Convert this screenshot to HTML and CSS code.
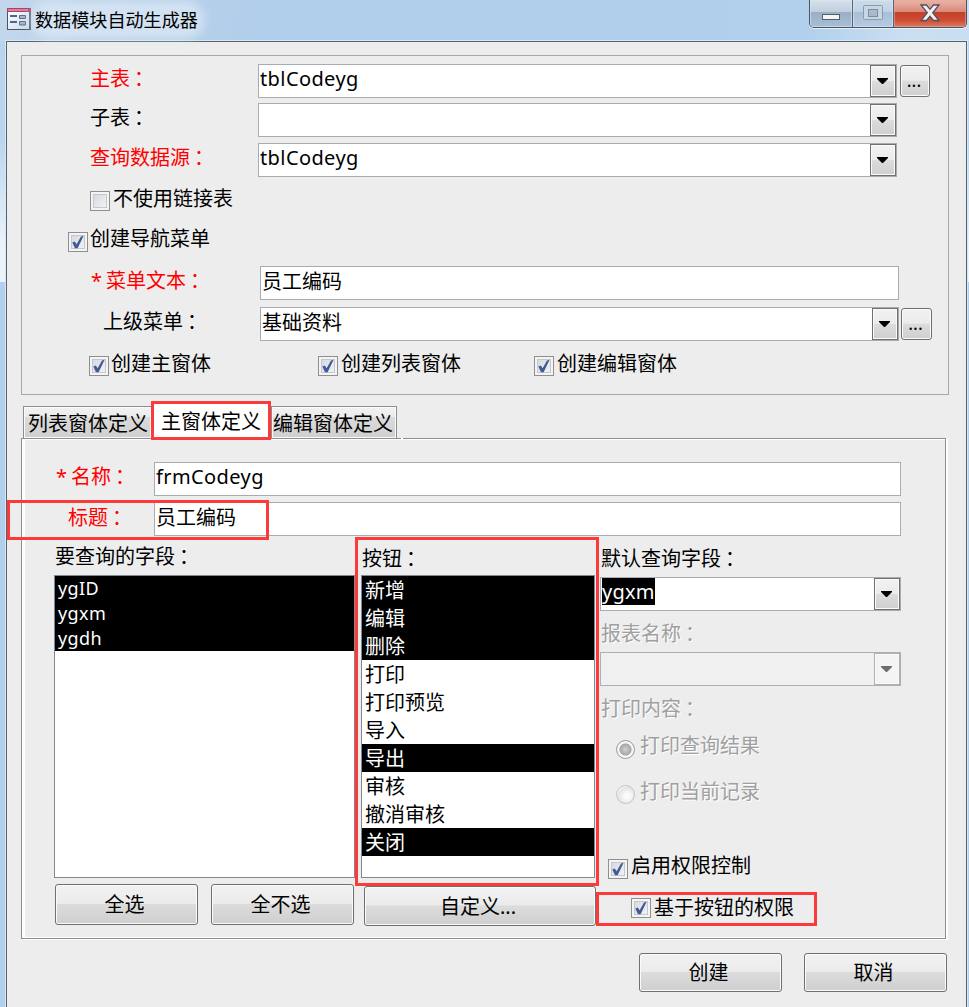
FILE: index.html
```html
<!DOCTYPE html>
<html lang="zh-CN">
<head>
<meta charset="utf-8">
<title>数据模块自动生成器</title>
<link rel="stylesheet" href="styles.css">
</head>
<body>
<svg width="0" height="0" class="defs">
  <symbol id="tick" viewBox="0 0 20 20"><path d="M4.300 10.600 L6.800 9.600 L8.600 12.200 L13 4.400 L15.600 3.800 L9.600 16.200 L7 16.200 Z" fill="#435a96"/></symbol>
  <symbol id="arrow" viewBox="0 0 12 6"><path d="M0 0H11V1L6 6H5L0 1Z" fill="currentColor"/></symbol>
</svg>
<div class="window">
  <header class="titlebar">
    <svg class="app-icon" width="24" height="22" viewBox="0 0 24 22">
      <defs><linearGradient id="ig" x2="1" y2="1"><stop offset="0" stop-color="#fff"/><stop offset="1" stop-color="#cbd7ea"/></linearGradient></defs>
      <rect width="24" height="22" fill="#47566f"/><rect x="1" y="1" width="21" height="20" fill="#8492aa"/>
      <rect x="1" y="4" width="21" height="17" fill="url(#ig)"/><rect width="24" height="4" fill="#a94368"/><rect x="1" y="1" width="20" height="2" fill="#d6829e"/>
      <path d="M3 8H10M3 14H10" stroke="#4d668c" stroke-width="2"/>
      <path d="M12.5 7.5H18.5V10.5H12.5ZM12.5 13.5H18.5V17H12.5Z" fill="#a8b4c8" stroke="#596f91"/>
    </svg>
    <h1 class="title">数据模块自动生成器</h1>
    <div class="controls">
      <div class="ctl min"><svg width="20" height="8"><rect x="1.500" y="1.500" width="17" height="5" fill="#f5f6f2" stroke="#535d6b"/></svg></div>
      <div class="ctl max"><svg width="20" height="17"><rect x=".5" y="1.500" width="19" height="14" rx="1" fill="#c8d5e2" stroke="#8b9bad"/><rect x="5.500" y="5.500" width="9" height="7" fill="#a9bace" stroke="#7c8da2"/></svg></div>
      <div class="ctl close"><svg width="20" height="18" viewBox="0 0 20 18"><path d="M1 1H6.500L10 5.300L13.500 1H19L12.700 8.800L19 16.500H13.500L10 12.300L6.500 16.500H1L7.300 8.800Z" fill="#f0f0f2" stroke="#56505e" stroke-width="1.300"/></svg></div>
    </div>
  </header>
  <main class="client">
    <section class="group">
      <div class="row r1"><label class="label req">主表<i class="c" lang="zh-TW">：</i></label><div class="combo"><span class="value">tblCodeyg</span><span class="drop"><svg class="arrow"><use href="#arrow"/></svg></span></div><button class="more">...</button></div>
      <div class="row r2"><label class="label">子表<i class="c" lang="zh-TW">：</i></label><div class="combo"><span class="value"></span><span class="drop"><svg class="arrow"><use href="#arrow"/></svg></span></div></div>
      <div class="row r3"><label class="label req">查询数据源<i class="c" lang="zh-TW">：</i></label><div class="combo"><span class="value">tblCodeyg</span><span class="drop"><svg class="arrow"><use href="#arrow"/></svg></span></div></div>
      <div class="row r4"><label class="check"><span class="box"></span>不使用链接表</label></div>
      <div class="row r5"><label class="check"><span class="box"><svg><use href="#tick"/></svg></span>创建导航菜单</label></div>
      <div class="row r6"><label class="label req"><span class="star">*</span>菜单文本<i class="c" lang="zh-TW">：</i></label><div class="combo"><span class="value han">员工编码</span></div></div>
      <div class="row r7"><label class="label">上级菜单<i class="c" lang="zh-TW">：</i></label><div class="combo"><span class="value han">基础资料</span><span class="drop"><svg class="arrow"><use href="#arrow"/></svg></span></div><button class="more">...</button></div>
      <div class="row r8">
        <label class="check"><span class="box"><svg><use href="#tick"/></svg></span>创建主窗体</label>
        <label class="check"><span class="box"><svg><use href="#tick"/></svg></span>创建列表窗体</label>
        <label class="check"><span class="box"><svg><use href="#tick"/></svg></span>创建编辑窗体</label>
      </div>
    </section>
    <nav class="tabs">
      <div class="tab first">列表窗体定义</div><div class="tab active">主窗体定义</div><div class="tab last">编辑窗体定义</div><div class="tab-gap"></div>
    </nav>
    <section class="panel">
      <div class="row p1"><label class="label req"><span class="star">*</span>名称<i class="c" lang="zh-TW">：</i></label><div class="combo"><span class="value">frmCodeyg</span></div></div>
      <div class="row p2"><label class="label req">标题<i class="c" lang="zh-TW">：</i></label><div class="combo"><span class="value han">员工编码</span></div></div>
      <div class="columns">
        <div class="col fields">
          <h2 class="head">要查询的字段<i class="c" lang="zh-TW">：</i></h2>
          <ul class="list small"><li class="sel">ygID</li><li class="sel">ygxm</li><li class="sel">ygdh</li></ul>
          <div class="pair"><button class="btn">全选</button><button class="btn">全不选</button></div>
        </div>
        <div class="col actions">
          <h2 class="head">按钮<i class="c" lang="zh-TW">：</i></h2>
          <ul class="list"><li class="sel">新增</li><li class="sel">编辑</li><li class="sel">删除</li><li>打印</li><li>打印预览</li><li>导入</li><li class="sel">导出</li><li>审核</li><li>撤消审核</li><li class="sel">关闭</li></ul>
          <button class="btn custom">自定义...</button>
        </div>
        <div class="col options">
          <h2 class="head">默认查询字段<i class="c" lang="zh-TW">：</i></h2>
          <div class="combo"><span class="value"><mark>ygxm</mark></span><span class="drop"><svg class="arrow"><use href="#arrow"/></svg></span></div>
          <h2 class="head dim">报表名称<i class="c" lang="zh-TW">：</i></h2>
          <div class="combo off"><span class="value"></span><span class="drop"><svg class="arrow"><use href="#arrow"/></svg></span></div>
          <h2 class="head dim">打印内容<i class="c" lang="zh-TW">：</i></h2>
          <label class="radio dim on"><span class="dot"></span>打印查询结果</label>
          <label class="radio dim second"><span class="dot"></span>打印当前记录</label>
          <label class="check perm"><span class="box"><svg><use href="#tick"/></svg></span>启用权限控制</label>
          <label class="check perm-btn"><span class="box"><svg><use href="#tick"/></svg></span>基于按钮的权限</label>
        </div>
      </div>
    </section>
    <footer class="footer"><button class="btn">创建</button><button class="btn">取消</button></footer>
  </main>
  <div class="mark m-tab"></div>
  <div class="mark m-title"></div>
  <div class="mark m-list"></div>
  <div class="mark m-perm"></div>
</div>
</body>
</html>
```
FILE: styles.css
```css
* { box-sizing: border-box; }
body { margin: 0; font: 20px/28px "Noto Sans", "Noto Sans CJK SC", sans-serif; color: #000; white-space: nowrap; }
h1, h2, ul { margin: 0; padding: 0; font-size: 20px; font-weight: 400; list-style: none; }
label, .head { display: block; }
.defs { position: absolute; }
.c { font-family: "Noto Sans CJK TC", sans-serif; font-style: normal; line-height: 0; margin-left: -1px; vertical-align: -1px; }
.window {
  position: relative; width: 969px; height: 1007px; overflow: hidden;
  background: linear-gradient(#b9d3ec 0, #bad5ee 140px, #e9f2fa 240px, #edf4fb 282px, #b1d0ed 282px, #b1d0ed 100%);
}

/* Title bar */
.titlebar { display: flex; height: 41px; background: linear-gradient(100deg, #c3d7ec 0, #b1ceea 260px, #b1d0ec 800px, #cbdff2 900px, #c9def2 100%); }
.app-icon { margin: 8px 0 0 7px; flex: none; }
.title {
  margin: 6px 0 0 4px; font-size: 18.1px; line-height: 28px; padding: 0 2px 0 0; height: 28px;
  border-radius: 14px; background: #dce9f5b0; box-shadow: 0 0 9px 5px #dce9f5b0;
}
.controls {
  display: flex; margin: 0 2px 0 auto; width: 158px; height: 28px; border: 1px solid #4a5564; border-top: 0;
  border-radius: 0 0 5px 5px; overflow: hidden; flex: none; box-shadow: 0 1px 0 #e8f1f9;
}
.ctl { display: flex; justify-content: center; border-right: 1px solid #576476; box-shadow: inset 0 0 0 1px #dbe6f0a0; background: linear-gradient(#d5e1ec 0, #c0cedd 45%, #9bb0c5 46%, #a7bed5 100%); }
.min { width: 43px; padding-top: 13px; }
.max { width: 41px; padding-top: 4px; background: linear-gradient(#cddcea 0, #c0d2e4 45%, #a9bfd6 46%, #b5cbe1 100%); }
.close { flex: 1; padding-top: 4px; border: 0; box-shadow: inset 0 0 0 1px #eaa89a90; background: linear-gradient(#eab5a9 0, #d98778 45%, #c2412b 46%, #cf4c34 75%, #dc7b63 100%); }

.client { margin-left: 6px; width: 961px; height: 966px; background: #ededed; border: 1px solid #56626e; border-bottom: 0; box-shadow: 0 0 0 1px #d7e8f7; }

/* Fields */
.row { display: flex; align-items: flex-start; height: 34px; }
.label { flex: none; line-height: 30px; }
.req { color: #f00; }
.star { display: inline-block; width: 15px; }
.combo { display: flex; width: 639px; height: 34px; padding: 0 0 0 1px; background: #fff; border: 1px solid #a9abb2; flex: none; }
.value { flex: 1; letter-spacing: .4px; }
.value.han { line-height: 30px; letter-spacing: 0; }
.drop { display: flex; align-items: center; justify-content: center; width: 26px; height: 32px; border: 1px solid #707070; box-shadow: inset 0 0 0 1px #fafafa; background: linear-gradient(#f2f2f2 0, #ebebeb 49%, #dcdcdc 50%, #cfcfcf 100%); }
.arrow { width: 12px; height: 6px; color: #000; }
.more, .btn { font: inherit; color: inherit; padding: 0 4px 0 0; border: 1px solid #707070; border-radius: 3px; box-shadow: inset 0 0 0 1px #fafafa; background: linear-gradient(#f2f2f2 0, #ebebeb 48%, #dcdcdc 49%, #cfcfcf 100%); }
.more { width: 30px; height: 32px; margin: 1px 0 0 3px; line-height: 28px; font-size: 18px; padding: 0 2px 2px 0; }
.check { display: flex; align-items: flex-start; height: 28px; line-height: 30px; flex: none; }
.box { width: 20px; height: 20px; margin: 7px 3px 0 0; border: 1px solid #8e8f8f; background: linear-gradient(135deg, #d0d4db, #f8f8f8); box-shadow: inset 0 0 0 2px #f4f4f4, inset 0 0 0 3px #c4c8ce; flex: none; }
.box svg { display: block; width: 20px; height: 20px; margin: -1px; }

/* Source settings */
.group { width: 928px; height: 340px; margin: 13px 0 0 14px; padding-top: 8px; border: 1px solid #a5a7ae; }
.group .label { width: 236px; padding-left: 68px; }
.r2 { margin-top: 5px; }
.r3 { margin-top: 6px; }
.r4 { margin-top: 7px; padding-left: 68px; height: 28px; }
.r5 { margin-top: 12px; padding-left: 46px; height: 28px; }
.r5 .box { margin: 8px 2px 0 0; }
.r6 { margin-top: 14px; }
.group .r6 .label { width: 238px; padding-left: 69px; line-height: 29px; }
.r7 { margin-top: 7px; }
.group .r7 .label { width: 238px; padding-left: 81px; }
.r7 .more { margin-left: 2px; width: 31px; }
.r8 { margin-top: 8px; padding-left: 67px; height: 28px; }
.r8 .check:nth-child(1) { width: 229px; }
.r8 .check:nth-child(1) .box { margin-right: 2px; }
.r8 .check:nth-child(2) { width: 216px; }

/* Tabs */
.tabs { display: flex; height: 32px; margin: 11px 0 0 16px; }
.tab { height: 32px; line-height: 34px; border: 1px solid #8c8e94; border-bottom: 0; box-shadow: inset 0 0 0 1px #fafafa; background: linear-gradient(#f2f2f2 0, #ebebeb 32%, #dbdbdb 33%, #cfcfcf 100%); }
.first { width: 129px; padding-left: 4px; }
.active { width: 119px; height: 37px; margin-top: -5px; padding-left: 8px; line-height: 40px; background: #fff; z-index: 1; }
.last { width: 126px; padding-left: 1px; }
.tab-gap { width: 2px; height: 1px; margin: 32px 0 0 4px; background: #fff; z-index: 1; }

.panel { width: 925px; height: 501px; margin-left: 14px; padding-top: 22px; border: 1px solid #8c8e94; box-shadow: inset 3px 1px 0 #fff, inset 0 -1px 0 #fff, 2px 1px 0 #fff; }
.panel .row .label { width: 132px; }
.panel .row .combo { width: 747px; }
.p1 { margin-top: 1px; }
.panel .p1 .label { padding-left: 34px; line-height: 30px; }
.p2 { margin-top: 6px; }
.panel .p2 .label { padding-left: 46px; line-height: 31px; }
.columns { display: flex; padding-left: 32px; }
.fields { width: 301px; padding-top: 7px; }
.actions { width: 234px; margin-left: 6px; padding-top: 8px; }
.options { width: 301px; margin-left: 5px; padding-top: 8px; }
.head { height: 28px; padding-left: 1px; line-height: 30px; }
.fields .head { line-height: 28px; }
.list { height: 303px; border: 1px solid #828790; background: #fff; margin-top: 3px; }
.list li { height: 28px; padding-left: 3px; line-height: 30px; }
.fields .list { margin-top: 4px; }
.list.small li { height: 25px; line-height: 25px; font-size: 18px; letter-spacing: .4px; }
.list .sel { background: #000; color: #fff; }
.pair { display: flex; gap: 13px; padding: 6px 0 0 1px; }
.btn { width: 143px; height: 41px; }
.btn.custom { display: block; width: 232px; height: 40px; margin: 8px 0 0 3px; padding-top: 2px; }
.options .combo { width: 301px; margin-top: 5px; }
mark { display: inline-block; height: 27px; line-height: 28px; background: #000; color: #fff; letter-spacing: .2px; }
.dim { color: #a0a0a0; text-shadow: 1px 1px 0 #fff; }
.head.dim { margin-top: 8px; }
.options .off { margin-top: 5px; background: #f0f0f0; border-color: #adafb2; }
.off .drop { background: #f4f4f4; border-color: #adb2b5; }
.off .arrow { color: #6d6d6d; }
.radio { display: flex; align-items: flex-start; height: 28px; line-height: 30px; padding-left: 16px; margin-top: 9px; }
.dot { width: 19px; height: 19px; margin: 9px 5px 0 0; border: 1px solid #c4c4c6; border-radius: 50%; background: radial-gradient(circle at 60% 60%, #fafafa 20%, #e4e4e8 60%, #f4f4f4 70%); }
.on .dot { border-color: #9b9b9b; background: radial-gradient(circle at 50% 50%, #d0d0d0 0, #ababab 5px, #a0a0a0 5.5px, #f6f6f6 6.5px); }
.second { margin-top: 18px; }
.second .dot { margin-top: 8px; }
.perm { margin-top: 46px; padding-left: 8px; }
.perm .box { margin-top: 8px; }
.perm-btn { margin-top: 14px; padding-left: 31px; }
.perm-btn .box { margin-top: 5px; }

.footer { display: flex; gap: 22px; padding: 14px 0 0 632px; }
.footer .btn { height: 39px; }

/* Highlight frames drawn over the form */
.mark { position: absolute; border: 3px solid #fb3b3a; z-index: 2; }
.m-tab { left: 151px; top: 401px; width: 120px; height: 39px; }
.m-title { left: 7px; top: 500px; width: 262px; height: 40px; }
.m-list { left: 355px; top: 537px; width: 244px; height: 349px; }
.m-perm { left: 596px; top: 892px; width: 221px; height: 34px; }
```
